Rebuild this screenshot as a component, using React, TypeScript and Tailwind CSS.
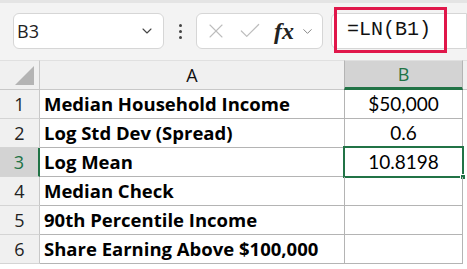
import { ChevronDown, X, Check } from "lucide-react";

const rows = [
  { n: 1, a: "Median Household Income", b: "$50,000" },
  { n: 2, a: "Log Std Dev (Spread)", b: "0.6" },
  { n: 3, a: "Log Mean", b: "10.8198", sel: true },
  { n: 4, a: "Median Check", b: "" },
  { n: 5, a: "90th Percentile Income", b: "" },
  { n: 6, a: "Share Earning Above $100,000", b: "" },
];

const ui = { fontFamily: '"Open Sans", "Noto Sans", sans-serif' };
const label = { fontFamily: '"Open Sans", "Noto Sans", sans-serif' };
const num = { fontFamily: 'Lato, "Liberation Sans", sans-serif' };

export default function App() {
  return (
    <div className="w-[467px] h-[269px] overflow-hidden bg-white">
      {/* toolbar */}
      <div className="h-[60px] bg-[#f3f3f3] border-t-[3px] border-[#e4e4e4] flex items-start pt-[10px] pl-[13px]" style={ui}>
        <div className="w-[151px] h-[36px] bg-white border border-[#d6d6d6] rounded-[6px] flex items-center justify-between pl-[3px] pr-[8px]">
          <span className="text-[18px] text-[#222]">B3</span>
          <ChevronDown className="w-[16px] h-[16px] text-[#444]" strokeWidth={1.6} />
        </div>
        <div className="w-[32px] h-[36px] flex flex-col items-center justify-center gap-[3px]">
          <span className="w-[3px] h-[3px] rounded-full bg-[#444]" />
          <span className="w-[3px] h-[3px] rounded-full bg-[#444]" />
          <span className="w-[3px] h-[3px] rounded-full bg-[#444]" />
        </div>
        <div className="w-[127px] h-[36px] bg-white border border-[#d6d6d6] rounded-[6px] flex items-center pl-[7px]">
          <X className="w-[24px] h-[24px] text-[#bdbdbd]" strokeWidth={1.1} />
          <Check className="w-[26px] h-[26px] text-[#bdbdbd] ml-[9px]" strokeWidth={1.1} />
          <span className="ml-[11px] text-[24px] italic font-semibold text-[#222] leading-none" style={{ fontFamily: '"Liberation Serif", serif' }}>fx</span>
          <ChevronDown className="w-[15px] h-[15px] text-[#888] ml-[6px]" strokeWidth={1.6} />
        </div>
        <div className="ml-[8px] flex-1 h-[36px] bg-white border border-[#d6d6d6] rounded-l-[6px] relative">
          <div className="absolute left-[2px] top-[-7px] w-[113px] h-[46px] border-[3px] border-[#e0174a] flex items-center pl-[10px]">
            <span className="text-[20px] text-[#111] leading-none" style={{ fontFamily: '"Liberation Mono", monospace' }}>=LN(B1)</span>
          </div>
        </div>
      </div>

      {/* sheet */}
      <div className="grid grid-cols-[40px_304px_119px_1fr]">
        {/* header row */}
        <div className="h-[30px] bg-[#f0f0f0] border-t border-[#e0e0e0] border-r border-r-[#c8c8c8] border-b border-b-[#c8c8c8] flex items-end justify-end pr-[5px] pb-[4px]">
          <div className="w-0 h-0 border-l-[19px] border-l-transparent border-b-[19px] border-b-[#b4b4b4]" />
        </div>
        <div className="h-[30px] bg-[#f0f0f0] border-t border-[#e0e0e0] border-b border-b-[#c8c8c8] flex items-center justify-center text-[18px] text-[#111]" style={ui}>A</div>
        <div className="h-[30px] bg-[#d3d3d3] border-t border-[#e0e0e0] border-l border-l-[#b4b4b4] border-r border-r-[#b4b4b4] border-b-[3px] border-b-[#217346] flex items-center justify-center text-[18px] text-[#217346]" style={ui}>B</div>
        <div className="h-[30px] bg-[#f0f0f0] border-t border-[#e0e0e0] border-b border-b-[#c8c8c8]" />

        {rows.map((r) => (
          <Row key={r.n} {...r} />
        ))}
      </div>
    </div>
  );
}

function Row({ n, a, b, sel }: { n: number; a: string; b: string; sel?: boolean }) {
  return (
    <>
      <div
        className={`h-[29px] border-b border-[#d4d4d4] flex items-center justify-center text-[18px] ${
          sel ? "bg-[#d3d3d3] text-[#217346] border-r-2 border-r-[#217346]" : "bg-[#f0f0f0] text-[#222] border-r border-r-[#c8c8c8]"
        }`}
        style={ui}
      >
        {n}
      </div>
      <div className="h-[29px] border-b border-[#b4b4b4] flex items-center pl-[4px] text-[18.5px] font-bold text-black" style={label}>
        {a}
      </div>
      <div className="h-[29px] border-b border-x border-[#b4b4b4] flex items-center justify-center text-[19px] text-black relative" style={num}>
        {b}
        {sel && (
          <>
            <div className="absolute left-[-2px] top-[-2px] right-[-2px] bottom-[-2px] border-2 border-[#217346]" />
            <div className="absolute right-[-4px] bottom-[-4px] w-[6px] h-[6px] bg-[#217346] border border-white" />
          </>
        )}
      </div>
      <div className="h-[29px] bg-white" />
    </>
  );
}
